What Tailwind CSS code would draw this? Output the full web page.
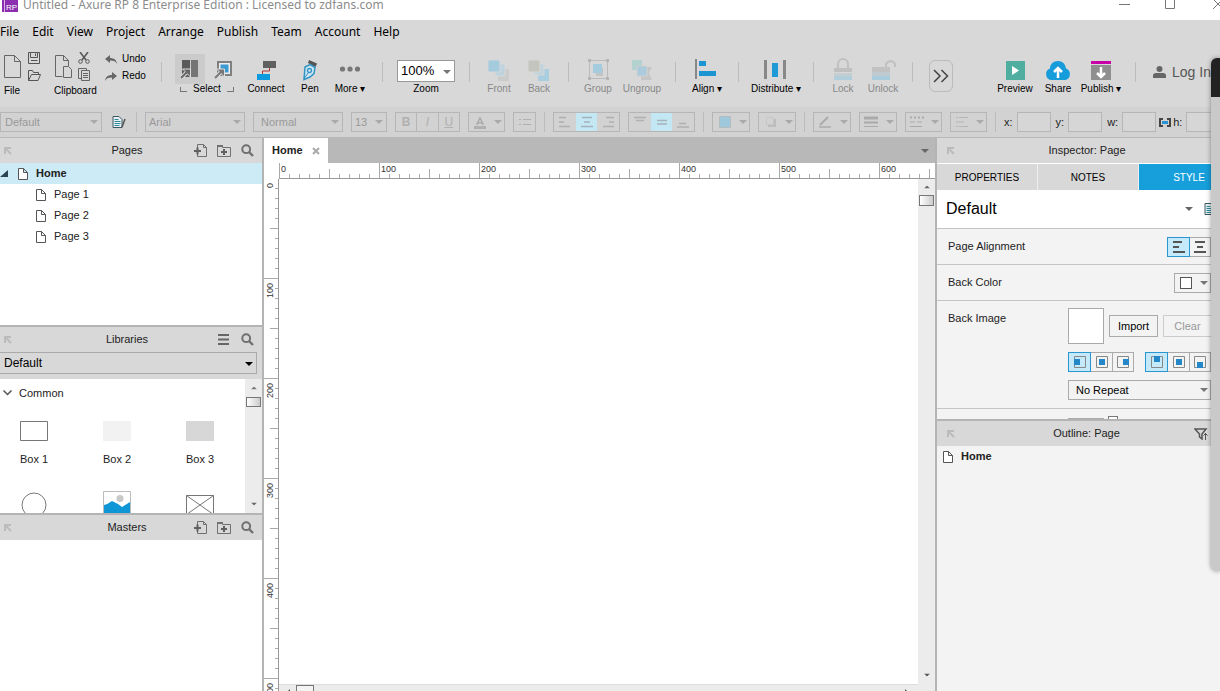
<!DOCTYPE html>
<html lang="en">
<head>
    <meta charset="UTF-8">
    <meta name="viewport" content="width=device-width, initial-scale=1.0">
    <title>Untitled - Axure RP 8 Enterprise Edition</title>
    <script src="https://cdn.jsdelivr.net/npm/@tailwindcss/browser@4"></script>
</head>
<body class="relative flex h-screen flex-col overflow-hidden bg-[#d8d8d8] font-['Liberation_Sans',Arial,sans-serif] text-[11px] text-[#222]">

    <!-- Shared icons -->
    <svg class="hidden">
        <symbol id="page" viewBox="0 0 10 12"><path d="M.5.5h5l4 4v7h-9zM5.5.5v4h4" fill="#fff" stroke="#555"/></symbol>
        <symbol id="arrow" viewBox="0 0 8 4"><path d="M0 0h8L4 4z" fill="currentColor"/></symbol>
        <symbol id="collapse" viewBox="0 0 8 8"><path d="M1 7V1h6M1 1l6 6" fill="none" stroke="#bbb" stroke-width="2"/></symbol>
        <symbol id="search" viewBox="0 0 13 13"><circle cx="5.2" cy="5.2" r="3.9" fill="none" stroke="#707070" stroke-width="2"/><path d="M8 8l4 4" stroke="#707070" stroke-width="2.4"/></symbol>
        <symbol id="add-page" viewBox="0 0 13 13"><path d="M3.500 4V.5h6l3 3v9h-9V10M9.500.5v3h3" fill="none" stroke="#707070"/><path d="M0 7h7M3.500 3.500v7" stroke="#606060" stroke-width="2"/></symbol>
        <symbol id="add-folder" viewBox="0 0 14 13"><path d="M.5 12.500V1.500h5v2h8v9z" fill="none" stroke="#707070"/><path d="M0 2h6" stroke="#707070" stroke-width="2"/><path d="M4 8h6M7 5v6" stroke="#606060" stroke-width="2"/></symbol>
        <symbol id="style-sheet" viewBox="0 0 14 14"><path d="M1 1.500h6l3 3v8H1z" fill="#e8f0f2" stroke="#3c5a66"/><path d="M2.500 4.500h4M2.500 6.500h6M2.500 8.500h6M2.500 10.500h5" stroke="#2c8a9c"/><path d="M13 4l-3 8" stroke="#555" stroke-width="1.500"/></symbol>
    </svg>

    <!-- Title bar -->
    <header class="flex h-5 shrink-0 items-start bg-white text-[#8c8c8c]">
        <svg class="ml-[2px] h-3 w-4" viewBox="0 0 16 12"><path d="M0 0h16v12H0z" fill="#8b2fb0"/><path d="M2.500 0v12" stroke="#d9b3e6"/><text x="4" y="10" font-size="8" fill="#fff" font-family="Liberation Sans">RP</text></svg>
        <h1 class="ml-[5px] font-['Noto_Sans',sans-serif] text-[12px] leading-[10px]">Untitled - Axure RP 8 Enterprise Edition : Licensed to zdfans.com</h1>
        <div class="-mr-1 ml-auto flex gap-[35px]">
            <button type="button" aria-label="Minimize"><svg class="h-[10px] w-[11px]" viewBox="0 0 11 10"><path d="M0 4.500h11" stroke="#777"/></svg></button>
            <button type="button" aria-label="Maximize"><svg class="h-[10px] w-[11px]" viewBox="0 0 11 10"><path d="M.5 0v8.500h9V0" fill="none" stroke="#777"/></svg></button>
            <button type="button" aria-label="Close"><svg class="h-[10px] w-[13px]" viewBox="0 0 13 10"><path d="M2-1l10 10M12-1L2 9" stroke="#777"/></svg></button>
        </div>
    </header>

    <!-- Menu -->
    <nav class="flex h-[22px] shrink-0 items-center gap-[13px] pt-[2px] font-['Noto_Sans',sans-serif] text-[12px] text-black">
        <a href="#">File</a>
        <a href="#">Edit</a>
        <a href="#">View</a>
        <a href="#">Project</a>
        <a href="#">Arrange</a>
        <a href="#">Publish</a>
        <a href="#">Team</a>
        <a href="#">Account</a>
        <a href="#">Help</a>
    </nav>

    <!-- Main toolbar -->
    <div class="flex h-[65px] shrink-0 items-start whitespace-nowrap text-[10px] leading-3 text-black">
        <div class="w-[54px] shrink-0 pt-[10px] pl-1">
            <div class="flex items-center gap-[7px]">
                <button type="button" aria-label="New"><svg class="block h-[23px] w-[17px]" viewBox="0 0 17 23"><path d="M.5.5h10l6 6v16H.5zM10.500.5v6h6" fill="none" stroke="#666"/></svg></button>
                <div class="flex flex-col gap-[6px]">
                    <button type="button" aria-label="Save"><svg class="block h-[12px] w-[13px]" viewBox="0 0 13 12"><path d="M.5.5h11v11H.5zM2.500.5v5h7v-5M3 8.500h6.500M7.500 1.500v2.500" fill="none" stroke="#555"/></svg></button>
                    <button type="button" aria-label="Open"><svg class="block h-[11px] w-[13px]" viewBox="0 0 13 11"><path d="M.5 10.500v-10h4l1 2h5v2M.5 10.500l3-6h9l-2.500 6z" fill="none" stroke="#555"/></svg></button>
                </div>
            </div>
            <span class="mt-1 block">File</span>
        </div>
        <div class="w-[50px] shrink-0 pt-[10px]">
            <div class="flex items-center gap-[6px]">
                <button type="button" aria-label="Paste"><svg class="block h-[23px] w-[18px]" viewBox="0 0 18 23"><path d="M8.500 21.500H1.500v-21h8l5 5V11M9.500.5v5h5M9.500 11.500h5l3 3v8h-8z" fill="none" stroke="#666"/></svg></button>
                <div class="flex flex-col gap-1">
                    <button type="button" aria-label="Cut"><svg class="block h-[12px] w-[12px]" viewBox="0 0 12 12"><path d="M2 0l6 8M10 0L4 8" stroke="#555" stroke-width="1.500"/><circle cx="2.500" cy="9.500" r="1.800" fill="none" stroke="#555"/><circle cx="9.500" cy="9.500" r="1.800" fill="none" stroke="#555"/></svg></button>
                    <button type="button" aria-label="Copy"><svg class="block h-[13px] w-[12px]" viewBox="0 0 12 13"><path d="M3.500 10.500h-3V.5h8v2M3.500 2.500h8v10h-8zM5 5.500h5M5 7.500h5M5 9.500h5" fill="none" stroke="#666"/></svg></button>
                </div>
            </div>
            <span class="mt-1 block">Clipboard</span>
        </div>
        <div class="flex w-12 shrink-0 flex-col gap-[5px] pt-[11px] pl-[1px]">
            <button type="button" class="flex items-center gap-[5px]"><svg class="h-[9px] w-[12px]" viewBox="0 0 12 9"><path d="M5 0L0 4l5 4V5.500c4 0 6 1 7 3.500-.3-4-3-6-7-6z" fill="#666"/></svg>Undo</button>
            <button type="button" class="flex items-center gap-[5px]"><svg class="h-[9px] w-[12px]" viewBox="0 0 12 9"><path d="M7 0l5 4-5 4V5.500C3 5.500 1 6.500 0 9c.3-4 3-6 7-6z" fill="#666"/></svg>Redo</button>
        </div>

        <div class="mx-[9px] mt-5 h-5 w-px shrink-0 bg-[#bcbcbc]"></div>

        <div class="ml-1 w-16 shrink-0 pt-3">
            <div class="flex gap-1">
                <button type="button" aria-label="Select intersected" class="flex size-[30px] items-center justify-center bg-[#cbcbcb]"><svg class="size-5" viewBox="0 0 20 20"><path d="M2 1h8v17H2z" fill="#5a5a5a"/><path d="M11 1h7v17h-7z" fill="#757575"/><path d="M0 20l6-6" stroke="#ddd" stroke-width="4"/><path d="M2.500 10h8v8z" fill="#666" stroke="#ddd"/><path d="M1 19l6-6" stroke="#666" stroke-width="2"/></svg></button>
                <button type="button" aria-label="Select contained" class="flex size-[30px] items-center justify-center"><svg class="size-5" viewBox="0 0 20 20"><path d="M4 3h13v13H4z" fill="#eee" stroke="#808080" stroke-width="2"/><path d="M6.500 5.500h8v8h-8z" fill="#3a9bd0"/><path d="M0 20l6-6" stroke="#ddd" stroke-width="4"/><path d="M2.500 10h8v8z" fill="#777" stroke="#ddd"/><path d="M1 19l6-6" stroke="#777" stroke-width="2"/></svg></button>
            </div>
            <div class="-mt-[1px] flex items-center justify-center gap-[6px]">
                <span class="h-[5px] w-[7px] border-b border-l border-[#777]"></span>
                <span>Select</span>
                <span class="h-[5px] w-[7px] border-r border-b border-[#777]"></span>
            </div>
        </div>
        <button type="button" class="flex w-[54px] shrink-0 flex-col items-center pt-4"><svg class="mb-[1px] size-6" viewBox="0 0 24 24"><path d="M9 3h13v7H9z" fill="#606060"/><path d="M3 16h13v6H3z" fill="#0e9ade"/><path d="M15.500 10v3h-7v3" fill="none" stroke="#a33"/></svg>Connect</button>
        <button type="button" class="flex w-[34px] shrink-0 flex-col items-center pt-4"><svg class="mb-[1px] size-6" viewBox="0 0 24 24"><path d="M11 2l8 3.500-1.500 3.500-7.500-4z" fill="#555"/><path d="M7 9l5-2.500 5 3-1 6-4 3.500-6 2.500z" fill="#cfe6f2" stroke="#3395c4" stroke-width="1.500"/><circle cx="11.500" cy="12.500" r="2" fill="none" stroke="#3395c4" stroke-width="1.300"/><path d="M10.500 14.500l-4.500 6" stroke="#3395c4"/></svg>Pen</button>
        <button type="button" class="flex w-[46px] shrink-0 flex-col items-center pt-4"><svg class="mb-[1px] size-6" viewBox="0 0 24 24"><g fill="#777"><circle cx="4.500" cy="11" r="2.600"/><circle cx="12" cy="11" r="2.600"/><circle cx="19.500" cy="11" r="2.600"/></g></svg>More ▾</button>

        <div class="mx-[9px] mt-5 h-5 w-px shrink-0 bg-[#bcbcbc]"></div>

        <div class="flex w-[68px] shrink-0 flex-col items-center pt-[18px]">
            <div class="relative mb-[1px]">
                <select id="zoom" class="h-[22px] w-[58px] appearance-none border border-[#999] bg-white pl-[3px] text-[13px]"><option>100%</option></select>
                <svg class="pointer-events-none absolute top-[10px] right-[4px] h-1 w-2 text-[#777]"><use href="#arrow"/></svg>
            </div>
            <label for="zoom">Zoom</label>
        </div>

        <div class="mx-[9px] mt-5 h-5 w-px shrink-0 bg-[#bcbcbc]"></div>

        <button type="button" disabled class="flex w-10 shrink-0 flex-col items-center pt-4 text-[#888]"><svg class="mb-[1px] size-6" viewBox="0 0 24 24"><path d="M14 11h8v12H11v-6h3z" fill="#cbcbcb"/><path d="M8 6h10v12H8z" fill="#bdd3de" stroke="#d8d8d8"/><path d="M1 2h12v12H1z" fill="#a5cbdf" stroke="#d8d8d8"/></svg>Front</button>
        <button type="button" disabled class="flex w-10 shrink-0 flex-col items-center pt-4 text-[#888]"><svg class="mb-[1px] size-6" viewBox="0 0 24 24"><path d="M11 11h11v12H11z" fill="#a9cedf"/><path d="M7 6h10v11H7z" fill="#bdd3de" stroke="#d8d8d8"/><path d="M1 2h12v12H1z" fill="#c5c5c0" stroke="#d8d8d8"/></svg>Back</button>

        <div class="mx-[9px] mt-5 h-5 w-px shrink-0 bg-[#bcbcbc]"></div>

        <button type="button" disabled class="flex w-10 shrink-0 flex-col items-center pt-4 text-[#888]"><svg class="mb-[1px] size-6" viewBox="0 0 24 24"><path d="M3.500 2.500h18v18h-18z" fill="none" stroke="#bbb"/><path d="M10 10h7v8h-7z" fill="#c3c3c3"/><path d="M7 6h9v9H7z" fill="#a5cbdf"/><path d="M2 1h3v3H2zM20 1h3v3h-3zM2 19h3v3H2zM20 19h3v3h-3z" fill="#b5b5b5"/></svg>Group</button>
        <button type="button" disabled class="flex w-12 shrink-0 flex-col items-center pt-4 text-[#888]"><svg class="mb-[1px] size-6" viewBox="0 0 24 24"><path d="M2 2h10v10H2z" fill="#b3d1cf"/><path d="M11 9h11l-3 6 3 7H11z" fill="#c6c6c6"/><path d="M7 8h10v10H7z" fill="#a9cbdb" stroke="#d0d0d0"/></svg>Ungroup</button>

        <div class="mx-[9px] mt-5 h-5 w-px shrink-0 bg-[#bcbcbc]"></div>

        <button type="button" class="flex w-11 shrink-0 flex-col items-center pt-4"><svg class="mb-[1px] size-6" viewBox="0 0 24 24"><path d="M0 1h2v20H0z" fill="#888"/><path d="M4 3h7v5H4zM4 13h17v5H4z" fill="#1e95d3"/></svg>Align ▾</button>

        <div class="mx-[9px] mt-5 h-5 w-px shrink-0 bg-[#bcbcbc]"></div>

        <button type="button" class="flex w-14 shrink-0 flex-col items-center pt-4"><svg class="mb-[1px] size-6" viewBox="0 0 24 24"><path d="M0 2h3v19H0zM19 2h3v19h-3z" fill="#888"/><path d="M8 5h6v14H8z" fill="#1e9bd7"/></svg>Distribute ▾</button>

        <div class="mx-[9px] mt-5 h-5 w-px shrink-0 bg-[#bcbcbc]"></div>

        <button type="button" disabled class="flex w-10 shrink-0 flex-col items-center pt-4 text-[#888]"><svg class="mb-[1px] size-6" viewBox="0 0 24 24"><path d="M7 10V6a5 5 0 0 1 10 0v4" fill="none" stroke="#c0c0c0" stroke-width="2"/><path d="M3 10h18v4H3z" fill="#c0c0c0"/><path d="M3 15h18v3H3z" fill="#c4cdd0"/><path d="M3 18h18v4H3z" fill="#b0cedb"/></svg>Lock</button>
        <button type="button" disabled class="flex w-10 shrink-0 flex-col items-center pt-4 text-[#888]"><svg class="mb-[1px] size-6 overflow-visible" viewBox="0 0 24 24"><path d="M15 10V6a5 5 0 0 1 9 0v3" fill="none" stroke="#c0c0c0" stroke-width="2"/><path d="M1 9h18v5H1z" fill="#c2c2c2"/><path d="M1 14h18v4H1z" fill="#bfcbd0"/><path d="M1 18h18v4H1z" fill="#a9cddd"/></svg>Unlock</button>

        <div class="mx-[9px] mt-5 h-5 w-px shrink-0 bg-[#bcbcbc]"></div>

        <button type="button" aria-label="More tools" class="mt-[18px] ml-[7px] flex h-8 w-6 shrink-0 items-center justify-center rounded-md border border-[#bbb]"><svg class="h-[14px] w-4" viewBox="0 0 16 14"><path d="M1 1l6 6-6 6M8.500 1l6 6-6 6" fill="none" stroke="#444" stroke-width="1.500"/></svg></button>

        <button type="button" class="ml-10 flex w-11 shrink-0 flex-col items-center pt-4"><svg class="mb-[1px] size-6" viewBox="0 0 24 24"><path d="M3 3h19v19H3z" fill="#4fae9f"/><path d="M9 8v9l7-4.500z" fill="#fff"/></svg>Preview</button>
        <button type="button" class="flex w-[42px] shrink-0 flex-col items-center pt-4"><svg class="mb-[1px] h-6 w-[26px]" viewBox="0 0 26 24"><path d="M6 22a6 6 0 0 1-1-11.500C5 6 8.500 3 13 3s7.500 3 8 7.500A6 6 0 0 1 20 22z" fill="#169bdb"/><path d="M13 20v-8M9 14l4-4 4 4" fill="none" stroke="#fff" stroke-width="2.500"/></svg>Share</button>
        <button type="button" class="flex w-11 shrink-0 flex-col items-center pt-4"><svg class="mb-[1px] size-6" viewBox="0 0 24 24"><path d="M2 3h20v3H2z" fill="#c800a8"/><path d="M2 7h20v15H2z" fill="#8f8f8f"/><path d="M12 9v9M8 15l4 4 4-4" fill="none" stroke="#fff" stroke-width="2.500"/></svg>Publish ▾</button>

        <div class="mr-[9px] ml-3 mt-5 h-5 w-px shrink-0 bg-[#bcbcbc]"></div>

        <button type="button" class="ml-2 flex shrink-0 items-center gap-[6px] pt-[22px] text-[14px] leading-4 text-[#555]"><svg class="h-3 w-[13px]" viewBox="0 0 13 12"><circle cx="6.500" cy="3" r="3" fill="#666"/><path d="M0 12V9.500Q0 7 3 7h7q3 0 3 2.500V12z" fill="#666"/></svg>Log In</button>
    </div>

    <!-- Format bar -->
    <div class="flex h-[30px] shrink-0 items-center gap-2 whitespace-nowrap bg-[#d2d2d2] text-[#999]">
        <div class="relative shrink-0">
            <select aria-label="Widget style" disabled class="block h-5 w-[102px] appearance-none border border-[#b6b6b6] pl-1"><option>Default</option></select>
            <svg class="pointer-events-none absolute top-2 right-1 h-1 w-2 text-[#aaa]"><use href="#arrow"/></svg>
        </div>
        <button type="button" aria-label="Manage styles" class="flex w-[18px] shrink-0 justify-center"><svg class="size-[14px]"><use href="#style-sheet"/></svg></button>
        <div class="h-5 w-px shrink-0 bg-[#bcbcbc]"></div>
        <div class="relative shrink-0">
            <select aria-label="Font" disabled class="block h-5 w-[100px] appearance-none border border-[#b6b6b6] pl-[3px]"><option>Arial</option></select>
            <svg class="pointer-events-none absolute top-2 right-1 h-1 w-2 text-[#aaa]"><use href="#arrow"/></svg>
        </div>
        <div class="relative shrink-0">
            <select aria-label="Font weight" disabled class="block h-5 w-[90px] appearance-none border border-[#b6b6b6] pl-[7px]"><option>Normal</option></select>
            <svg class="pointer-events-none absolute top-2 right-1 h-1 w-2 text-[#aaa]"><use href="#arrow"/></svg>
        </div>
        <div class="relative shrink-0">
            <select aria-label="Font size" disabled class="block h-5 w-9 appearance-none border border-[#b6b6b6] pl-[3px]"><option>13</option></select>
            <svg class="pointer-events-none absolute top-2 right-1 h-1 w-2 text-[#aaa]"><use href="#arrow"/></svg>
        </div>
        <div class="flex h-5 w-[65px] shrink-0 divide-x divide-[#b6b6b6] border border-[#b6b6b6] text-[12px] leading-4 text-[#b0b0b0]">
            <button type="button" disabled class="flex-1 font-bold">B</button>
            <button type="button" disabled class="flex-1 italic">I</button>
            <button type="button" disabled class="flex-1 underline">U</button>
        </div>
        <button type="button" disabled aria-label="Text color" class="flex h-5 w-[37px] shrink-0 items-center justify-between border border-[#b6b6b6] pr-[2px] pl-1 text-[#aaa]"><svg class="h-[13px] w-[14px]" viewBox="0 0 14 13"><path d="M3.500 9L7 2l3.500 7M5 7h4" fill="none" stroke="#aaa" stroke-width="1.500"/><path d="M1 10h12v3H1z" fill="#b0b0b0"/></svg><svg class="h-1 w-2"><use href="#arrow"/></svg></button>
        <button type="button" disabled aria-label="Bullets" class="flex h-5 w-[23px] shrink-0 items-center justify-center border border-[#b6b6b6]"><svg class="h-3 w-3" viewBox="0 0 12 12"><path d="M0 3.500h2M4 3.500h8M0 8.500h2M4 8.500h8" stroke="#b0b0b0"/></svg></button>
        <div class="h-5 w-px shrink-0 bg-[#bcbcbc]"></div>
        <div class="flex h-5 w-[67px] shrink-0 border border-[#b6b6b6]">
            <button type="button" disabled aria-label="Align left" class="flex flex-1 items-center justify-center"><svg class="size-3" viewBox="0 0 12 12"><path d="M0 1.500h7M0 6h5M0 10.500h11" stroke="#b0b0b0" stroke-width="1.500"/></svg></button>
            <button type="button" disabled aria-label="Align center" class="flex flex-1 items-center justify-center bg-[#c4e7f4]"><svg class="size-3" viewBox="0 0 12 12"><path d="M1 1.500h10M3 6h6M0 10.500h12" stroke="#a5b4ba" stroke-width="1.500"/></svg></button>
            <button type="button" disabled aria-label="Align right" class="flex flex-1 items-center justify-center"><svg class="size-3" viewBox="0 0 12 12"><path d="M4 1.500h8M7 6h5M1 10.500h11" stroke="#b0b0b0" stroke-width="1.500"/></svg></button>
        </div>
        <div class="flex h-5 w-[67px] shrink-0 border border-[#b6b6b6]">
            <button type="button" disabled aria-label="Align top" class="flex flex-1 items-center justify-center"><svg class="size-3" viewBox="0 0 12 12"><path d="M0 1.500h12M2 4.500h8" stroke="#b0b0b0" stroke-width="1.500"/></svg></button>
            <button type="button" disabled aria-label="Align middle" class="flex flex-1 items-center justify-center bg-[#c4e7f4]"><svg class="size-3" viewBox="0 0 12 12"><path d="M1 4.500h10M1 8h10" stroke="#a5b4ba" stroke-width="1.500"/></svg></button>
            <button type="button" disabled aria-label="Align bottom" class="flex flex-1 items-center justify-center"><svg class="size-3" viewBox="0 0 12 12"><path d="M2 7.500h7M0 11h12" stroke="#b0b0b0" stroke-width="1.500"/></svg></button>
        </div>
        <div class="h-5 w-px shrink-0 bg-[#bcbcbc]"></div>
        <button type="button" disabled aria-label="Fill color" class="flex h-5 w-[38px] shrink-0 items-center justify-between border border-[#b6b6b6] pr-[2px] pl-[6px] text-[#aaa]"><svg class="size-3" viewBox="0 0 12 12"><path d="M.5.5h11v11H.5z" fill="#a0c8dc" stroke="#b5bcc0"/></svg><svg class="h-1 w-2"><use href="#arrow"/></svg></button>
        <button type="button" disabled aria-label="Shadow" class="flex h-5 w-[38px] shrink-0 items-center justify-between border border-[#b6b6b6] pr-[2px] pl-[6px] text-[#aaa]"><svg class="size-3" viewBox="0 0 12 12"><path d="M3 3h8v8H3z" fill="#bdbdbd"/><path d="M1.500 1.500h7v7h-7z" fill="#d2d2d2" stroke="#c6c6c6"/></svg><svg class="h-1 w-2"><use href="#arrow"/></svg></button>
        <div class="h-5 w-px shrink-0 bg-[#bcbcbc]"></div>
        <button type="button" disabled aria-label="Line color" class="flex h-5 w-[38px] shrink-0 items-center justify-between border border-[#b6b6b6] pr-[2px] pl-1 text-[#aaa]"><svg class="h-3 w-[14px]" viewBox="0 0 14 12"><path d="M2 9l8-8" stroke="#aaa" stroke-width="2"/><path d="M1 11h12" stroke="#b5b5b5" stroke-width="2"/></svg><svg class="h-1 w-2"><use href="#arrow"/></svg></button>
        <button type="button" disabled aria-label="Line width" class="flex h-5 w-[38px] shrink-0 items-center justify-between border border-[#b6b6b6] pr-[2px] pl-1 text-[#aaa]"><svg class="h-3 w-[14px]" viewBox="0 0 14 12"><path d="M0 2h14" stroke="#aaa" stroke-width="3"/><path d="M0 6.500h14" stroke="#aaa" stroke-width="2"/><path d="M0 10.500h14" stroke="#aaa"/></svg><svg class="h-1 w-2"><use href="#arrow"/></svg></button>
        <button type="button" disabled aria-label="Line style" class="flex h-5 w-[37px] shrink-0 items-center justify-between border border-[#b6b6b6] pr-[2px] pl-1 text-[#aaa]"><svg class="h-3 w-[14px]" viewBox="0 0 14 12"><path d="M0 1.500h14" stroke="#aaa" stroke-width="2" stroke-dasharray="2 2"/><path d="M0 6h12" stroke="#aaa" stroke-dasharray="5 2"/><path d="M0 10.500h12" stroke="#aaa"/></svg><svg class="h-1 w-2"><use href="#arrow"/></svg></button>
        <button type="button" disabled aria-label="Arrow style" class="flex h-5 w-[37px] shrink-0 items-center justify-between border border-[#b6b6b6] pr-[2px] pl-1 text-[#aaa]"><svg class="h-3 w-[14px]" viewBox="0 0 14 12"><path d="M1 1.500h2M4 1.500h9M1 10.500h2M4 10.500h9M1 6h8" stroke="#b5b5b5"/></svg><svg class="h-1 w-2"><use href="#arrow"/></svg></button>
        <div class="h-5 w-px shrink-0 bg-[#bcbcbc]"></div>
        <div class="flex shrink-0 items-center gap-[5px] text-[#222]">
            <label class="flex items-center gap-1">x:<input type="text" class="h-5 w-[34px] border border-[#b6b6b6] bg-[#d6d6d6]"></label>
            <label class="flex items-center gap-1">y:<input type="text" class="h-5 w-[34px] border border-[#b6b6b6] bg-[#d6d6d6]"></label>
            <label class="flex items-center gap-1">w:<input type="text" class="h-5 w-[34px] border border-[#b6b6b6] bg-[#d6d6d6]"></label>
            <label class="-ml-[2px] flex items-center gap-[2px]"><svg class="h-[9px] w-3" viewBox="0 0 12 9"><path d="M4 1H1v7h3M8 1h3v7H8" fill="none" stroke="#444" stroke-width="2"/><path d="M3 3h6v3H3z" fill="#2b93d4"/></svg>h:<input type="text" class="ml-[2px] h-5 w-[34px] border border-[#b6b6b6] bg-[#d6d6d6]"></label>
        </div>
    </div>

    <!-- Workspace -->
    <main class="flex min-h-0 flex-1 border-t border-[#b8b8b8]">

        <!-- Left panes -->
        <aside class="flex w-[264px] shrink-0 flex-col border-r-2 border-[#b4b4b4] bg-white">
            <section class="h-[187px] shrink-0">
                <header class="flex h-[25px] items-center bg-[#d8d8d8] pr-2 pl-1">
                    <svg class="size-2"><use href="#collapse"/></svg>
                    <h2 class="flex-1 pl-12 text-center">Pages</h2>
                    <div class="flex items-center gap-[10px]">
                        <button type="button" aria-label="Add page"><svg class="block size-[13px]"><use href="#add-page"/></svg></button>
                        <button type="button" aria-label="Add folder"><svg class="block h-[13px] w-[14px]"><use href="#add-folder"/></svg></button>
                        <button type="button" aria-label="Search pages"><svg class="block size-[13px]"><use href="#search"/></svg></button>
                    </div>
                </header>
                <ul class="leading-[21px]">
                    <li class="flex h-[21px] items-center bg-[#cdeaf7] font-bold"><svg class="h-[7px] w-[8px]" viewBox="0 0 8 7"><path d="M8 0v7H0z" fill="#2c4450"/></svg><svg class="mr-2 ml-[10px] h-3 w-[10px]"><use href="#page"/></svg>Home</li>
                    <li class="flex h-[21px] items-center pl-9"><svg class="mr-2 h-3 w-[10px]"><use href="#page"/></svg>Page 1</li>
                    <li class="flex h-[21px] items-center pl-9"><svg class="mr-2 h-3 w-[10px]"><use href="#page"/></svg>Page 2</li>
                    <li class="flex h-[21px] items-center pl-9"><svg class="mr-2 h-3 w-[10px]"><use href="#page"/></svg>Page 3</li>
                </ul>
            </section>

            <section class="flex h-[188px] shrink-0 flex-col border-t-2 border-[#b4b4b4]">
                <header class="flex h-[25px] shrink-0 items-center bg-[#d8d8d8] pr-2 pl-1">
                    <svg class="size-2"><use href="#collapse"/></svg>
                    <h2 class="flex-1 pl-6 text-center">Libraries</h2>
                    <div class="flex items-center gap-3">
                        <button type="button" aria-label="Library menu"><svg class="block h-[11px] w-[11px]" viewBox="0 0 11 11"><path d="M0 1h11M0 5.500h11M0 10h11" stroke="#666" stroke-width="2"/></svg></button>
                        <button type="button" aria-label="Search libraries"><svg class="block size-[13px]"><use href="#search"/></svg></button>
                    </div>
                </header>
                <div class="relative h-[27px] shrink-0 bg-[#d8d8d8] pr-[5px]">
                    <select aria-label="Library" class="block h-[22px] w-full appearance-none border border-l-0 border-[#aaa] pl-1 text-[12px] text-black"><option>Default</option></select>
                    <svg class="pointer-events-none absolute top-[10px] right-[9px] h-1 w-2 text-black"><use href="#arrow"/></svg>
                </div>
                <div class="flex min-h-0 flex-1">
                    <div class="flex-1 overflow-hidden">
                        <h3 class="flex h-7 items-center gap-[7px] pl-[3px]"><svg class="h-[6px] w-[9px]" viewBox="0 0 9 6"><path d="M.5.5l4 4 4-4" fill="none" stroke="#555" stroke-width="1.500"/></svg>Common</h3>
                        <div class="grid grid-cols-[68px_98px_68px] justify-items-center">
                            <div class="flex h-[74px] flex-col items-center gap-[10px] pt-[14px]"><svg class="h-5 w-7" viewBox="0 0 28 20"><path d="M.5.5h27v19H.5z" fill="#fff" stroke="#777"/></svg><span>Box 1</span></div>
                            <div class="flex h-[74px] flex-col items-center gap-[10px] pt-[14px]"><svg class="h-5 w-7"><path d="M0 0h28v20H0z" fill="#f2f2f2"/></svg><span>Box 2</span></div>
                            <div class="flex h-[74px] flex-col items-center gap-[10px] pt-[14px]"><svg class="h-5 w-7"><path d="M0 0h28v20H0z" fill="#d7d7d7"/></svg><span>Box 3</span></div>
                            <svg class="mt-[11px] size-[26px]" viewBox="0 0 26 26"><circle cx="13" cy="13" r="12" fill="#fff" stroke="#777"/></svg>
                            <svg class="mt-[10px] h-[26px] w-7" viewBox="0 0 28 26"><path d="M.5.5h27v25H.5z" fill="#fff" stroke="#bbb"/><circle cx="17" cy="7.500" r="3.500" fill="#c8c8c8"/><path d="M1 14q4-1 8-4 5 2 10 6l8-5v15H1z" fill="#0f96d6"/></svg>
                            <svg class="mt-[14px] h-5 w-7" viewBox="0 0 28 20"><path d="M.5.5h27v19H.5zM.5.5l27 19M27.500.5l-27 19" fill="#fff" stroke="#777"/></svg>
                        </div>
                    </div>
                    <div class="flex w-[17px] shrink-0 flex-col items-center bg-[#ececec] py-[7px]">
                        <svg class="h-1 w-[6px] rotate-180 text-[#777]" viewBox="0 0 8 4"><use href="#arrow"/></svg>
                        <div class="mt-[7px] h-[10px] w-[15px] border border-[#777] bg-gradient-to-r from-white to-[#ccc]"></div>
                        <svg class="mt-auto h-1 w-[6px] text-[#666]" viewBox="0 0 8 4"><use href="#arrow"/></svg>
                    </div>
                </div>
            </section>

            <section class="flex-1 border-t-2 border-[#b4b4b4]">
                <header class="flex h-[25px] items-center bg-[#d8d8d8] pr-2 pl-1">
                    <svg class="size-2"><use href="#collapse"/></svg>
                    <h2 class="flex-1 pl-12 text-center">Masters</h2>
                    <div class="flex items-center gap-[10px]">
                        <button type="button" aria-label="Add master"><svg class="block size-[13px]"><use href="#add-page"/></svg></button>
                        <button type="button" aria-label="Add master folder"><svg class="block h-[13px] w-[14px]"><use href="#add-folder"/></svg></button>
                        <button type="button" aria-label="Search masters"><svg class="block size-[13px]"><use href="#search"/></svg></button>
                    </div>
                </header>
            </section>
        </aside>

        <!-- Design canvas -->
        <section class="flex min-w-0 flex-1 flex-col bg-white">
            <div class="flex h-[25px] shrink-0 items-center justify-between bg-[#b8b8b8] pr-[6px]">
                <div class="flex h-full w-16 items-center gap-[9px] bg-white pl-2 font-bold">
                    Home
                    <button type="button" aria-label="Close tab"><svg class="block size-2" viewBox="0 0 8 8"><path d="M1 1l6 6M7 1L1 7" stroke="#aaa" stroke-width="2"/></svg></button>
                </div>
                <svg class="h-1 w-2 text-[#666]"><use href="#arrow"/></svg>
            </div>
            <svg class="h-4 w-full shrink-0 font-['Liberation_Sans'] text-[9px]">
                <defs>
                    <pattern id="ruler-x" x="15" width="100" height="16" patternUnits="userSpaceOnUse">
                        <path d="M.5 0v15M50.500 6v9M10.500 11v4M20.500 11v4M30.500 11v4M40.500 11v4M60.500 11v4M70.500 11v4M80.500 11v4M90.500 11v4" stroke="#aaa"/>
                    </pattern>
                </defs>
                <rect x="15" width="100%" height="16" fill="url(#ruler-x)"/>
                <path d="M15 15.500h2000" stroke="#999"/>
                <g fill="#333">
                    <text x="17" y="9">0</text>
                    <text x="117" y="9">100</text>
                    <text x="217" y="9">200</text>
                    <text x="317" y="9">300</text>
                    <text x="417" y="9">400</text>
                    <text x="517" y="9">500</text>
                    <text x="617" y="9">600</text>
                </g>
            </svg>
            <div class="flex min-h-0 flex-1">
                <svg class="h-full w-[15px] shrink-0 font-['Liberation_Sans'] text-[9px]">
                    <defs>
                        <pattern id="ruler-y" y="-1" width="15" height="100" patternUnits="userSpaceOnUse">
                            <path d="M0 .5h15M6 50.500h9M11 10.500h4M11 20.500h4M11 30.500h4M11 40.500h4M11 60.500h4M11 70.500h4M11 80.500h4M11 90.500h4" stroke="#aaa"/>
                        </pattern>
                    </defs>
                    <rect width="15" height="100%" fill="url(#ruler-y)"/>
                    <path d="M14.500 0v2000" stroke="#999"/>
                    <g fill="#333" text-anchor="end">
                        <text transform="translate(9 4) rotate(-90)">0</text>
                        <text transform="translate(9 104) rotate(-90)">100</text>
                        <text transform="translate(9 204) rotate(-90)">200</text>
                        <text transform="translate(9 304) rotate(-90)">300</text>
                        <text transform="translate(9 404) rotate(-90)">400</text>
                        <text transform="translate(9 504) rotate(-90)">500</text>
                    </g>
                </svg>
                <div class="flex min-w-0 flex-1 flex-col">
                    <div class="flex-1 bg-white"></div>
                    <div class="flex h-[7px] shrink-0 items-start overflow-hidden border-t border-[#ddd] bg-[#ececec]">
                        <svg class="mt-[4px] ml-[7px] h-2 w-1" viewBox="0 0 4 8"><path d="M4 0v8L0 4z" fill="#555"/></svg>
                        <div class="ml-[6px] h-3 w-[18px] shrink-0 border border-[#777] bg-[#f4f4f4]"></div>
                        <svg class="mt-[4px] mr-[9px] ml-auto h-2 w-1" viewBox="0 0 4 8"><path d="M0 0v8l4-4z" fill="#555"/></svg>
                    </div>
                </div>
                <div class="flex w-[17px] shrink-0 flex-col items-center bg-[#ececec] pt-[6px] pb-[14px]">
                    <svg class="h-1 w-[6px] rotate-180 text-[#666]" viewBox="0 0 8 4"><use href="#arrow"/></svg>
                    <div class="mt-[6px] h-[11px] w-[15px] border border-[#777] bg-gradient-to-r from-white to-[#ccc]"></div>
                    <svg class="mt-auto h-1 w-[6px] text-[#555]" viewBox="0 0 8 4"><use href="#arrow"/></svg>
                </div>
            </div>
        </section>

        <!-- Inspector and outline -->
        <aside class="flex w-[285px] shrink-0 flex-col overflow-hidden border-l-2 border-[#b4b4b4] bg-[#f3f3f3]">
            <section class="h-[281px] shrink-0 overflow-hidden">
                <header class="flex h-[25px] w-[298px] items-center bg-[#d8d8d8] pl-[10px]">
                    <svg class="size-2"><use href="#collapse"/></svg>
                    <h2 class="flex-1 pr-4 text-center">Inspector: Page</h2>
                </header>
                <div class="flex h-[27px] w-[302px] gap-[1px] border-t border-white bg-[#efefef] text-[10px] text-black">
                    <button type="button" class="flex-1 bg-[#d8d8d8]">PROPERTIES</button>
                    <button type="button" class="flex-1 bg-[#d8d8d8]">NOTES</button>
                    <button type="button" class="flex-1 bg-[#169fdb] text-white">STYLE</button>
                </div>
                <div class="flex h-[39px] items-center justify-between border-b border-[#c4c4c4] bg-white pr-[2px] pl-[9px] text-[16px] text-black">
                    Default
                    <div class="flex items-center gap-[11px]">
                        <svg class="h-1 w-2 text-[#666]"><use href="#arrow"/></svg>
                        <svg class="size-[14px]"><use href="#style-sheet"/></svg>
                    </div>
                </div>
                <div class="flex h-9 items-center justify-between border-b border-[#c4c4c4] pr-[9px] pl-[11px]">
                    Page Alignment
                    <div class="flex">
                        <button type="button" aria-label="Align page left" class="flex h-5 w-[23px] items-center justify-center border border-[#2b95cf] bg-[#c3e9fa]"><svg class="h-3 w-[12px]" viewBox="0 0 12 12"><path d="M0 1h9M0 6h6M0 11h12" stroke="#555" stroke-width="2"/></svg></button>
                        <button type="button" aria-label="Align page center" class="flex h-5 w-[21px] items-center justify-center border border-l-0 border-[#aaa]"><svg class="h-3 w-[12px]" viewBox="0 0 12 12"><path d="M1 1h10M3 6h6M0 11h12" stroke="#555" stroke-width="2"/></svg></button>
                    </div>
                </div>
                <div class="flex h-9 items-center justify-between border-b border-[#c4c4c4] pr-[9px] pl-[11px]">
                    Back Color
                    <button type="button" aria-label="Back color" class="flex h-5 w-[37px] items-center gap-2 border border-[#aaa] pl-[5px] text-[#777]"><span class="size-3 border border-[#555] bg-white"></span><svg class="h-1 w-2"><use href="#arrow"/></svg></button>
                </div>
                <div class="flex h-[108px] justify-between border-b border-[#c4c4c4] pt-[7px] pl-[11px]">
                    <span class="pt-[2px]">Back Image</span>
                    <div class="w-[152px] shrink-0">
                        <div class="flex items-center gap-[5px]">
                            <div class="size-9 shrink-0 border border-[#aaa] bg-white"></div>
                            <button type="button" class="h-[22px] w-[49px] shrink-0 border border-[#aaa] text-black">Import</button>
                            <button type="button" disabled class="h-[22px] w-[49px] shrink-0 border border-[#ccc] text-[#999]">Clear</button>
                        </div>
                        <div class="mt-2 flex">
                            <button type="button" aria-label="Left" class="flex h-5 w-[23px] items-center justify-center border border-[#2b95cf] bg-[#c3e9fa]"><svg class="size-3" viewBox="0 0 12 12"><path d="M.5.5h11v11H.5z" fill="none" stroke="#888"/><path d="M0 3h6v6H0z" fill="#2488c8"/></svg></button>
                            <button type="button" aria-label="Center" class="flex h-5 w-[22px] items-center justify-center border border-l-0 border-[#aaa]"><svg class="size-3" viewBox="0 0 12 12"><path d="M.5.5h11v11H.5z" fill="none" stroke="#888"/><path d="M3 3h6v6H3z" fill="#2488c8"/></svg></button>
                            <button type="button" aria-label="Right" class="flex h-5 w-[21px] items-center justify-center border border-l-0 border-[#aaa]"><svg class="size-3" viewBox="0 0 12 12"><path d="M.5.5h11v11H.5z" fill="none" stroke="#888"/><path d="M6 3h6v6H6z" fill="#2488c8"/></svg></button>
                            <button type="button" aria-label="Top" class="ml-[11px] flex h-5 w-[23px] items-center justify-center border border-[#2b95cf] bg-[#c3e9fa]"><svg class="size-3" viewBox="0 0 12 12"><path d="M.5.5h11v11H.5z" fill="none" stroke="#888"/><path d="M3 0h6v6H3z" fill="#2488c8"/></svg></button>
                            <button type="button" aria-label="Middle" class="flex h-5 w-[22px] items-center justify-center border border-l-0 border-[#aaa]"><svg class="size-3" viewBox="0 0 12 12"><path d="M.5.5h11v11H.5z" fill="none" stroke="#888"/><path d="M3 3h6v6H3z" fill="#2488c8"/></svg></button>
                            <button type="button" aria-label="Bottom" class="flex h-5 w-[21px] items-center justify-center border border-l-0 border-[#aaa]"><svg class="size-3" viewBox="0 0 12 12"><path d="M.5.5h11v11H.5z" fill="none" stroke="#888"/><path d="M3 6h6v6H3z" fill="#2488c8"/></svg></button>
                        </div>
                        <div class="relative mt-2 w-[143px]">
                            <select aria-label="Repeat" class="block h-5 w-full appearance-none border border-[#aaa] pl-[7px] text-black"><option>No Repeat</option></select>
                            <svg class="pointer-events-none absolute top-2 right-[3px] h-1 w-2 text-[#777]"><use href="#arrow"/></svg>
                        </div>
                    </div>
                </div>
                <!-- Next row, cut off by the outline pane -->
                <div class="flex items-start pt-[7px] pl-[131px]">
                    <span class="mt-[2px] h-5 w-9 shrink-0 border border-[#aaa]"></span>
                    <span class="ml-1 h-5 w-[10px] shrink-0 border border-[#777] bg-white"></span>
                </div>
            </section>
            <section class="flex-1 border-t-2 border-[#b4b4b4]">
                <header class="flex h-[25px] items-center bg-[#d8d8d8] pr-3 pl-[10px]">
                    <svg class="size-2"><use href="#collapse"/></svg>
                    <h2 class="flex-1 pl-6 text-center">Outline: Page</h2>
                    <button type="button" aria-label="Filter"><svg class="block h-3 w-[14px]" viewBox="0 0 14 12"><path d="M1 1h11L8 6v5L5.500 9V6z" fill="none" stroke="#555" stroke-width="1.500"/><path d="M11.500 5v7M9.500 7.500l2-2 2 2" fill="none" stroke="#555"/></svg></button>
                </header>
                <div class="flex h-[21px] items-center gap-2 pl-[6px] font-bold"><svg class="h-3 w-[10px]"><use href="#page"/></svg>Home</div>
            </section>
        </aside>
    </main>

    <!-- Collapsed side window over the right edge -->
    <div class="absolute top-[58px] right-0 h-[513px] w-[9px] overflow-hidden rounded-l-md bg-[#c9c9c9] shadow-[0_0_5px_rgba(0,0,0,0.4)]">
        <div class="h-[39px] bg-[#222]"></div>
    </div>
</body>
</html>
